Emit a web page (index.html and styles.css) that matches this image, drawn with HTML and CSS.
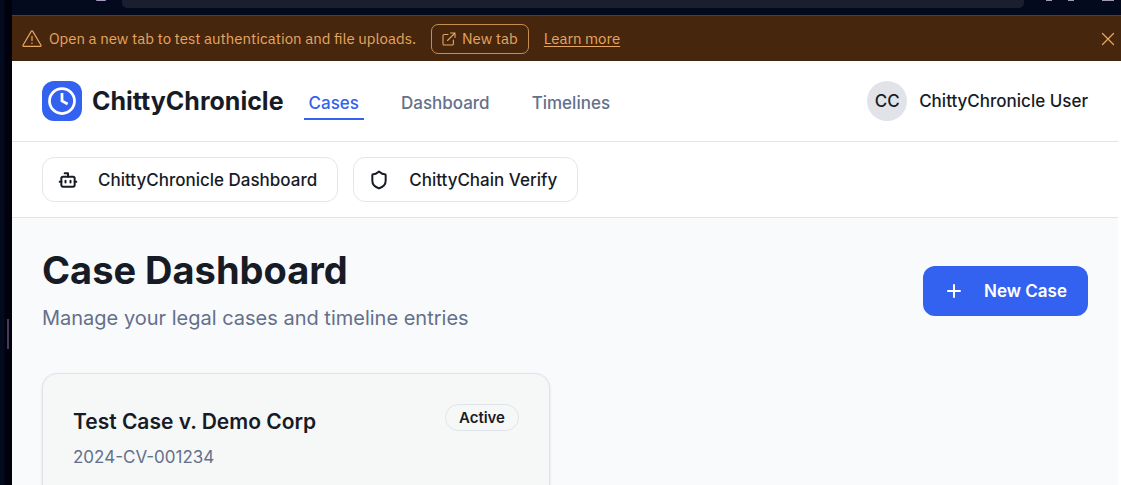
FILE: index.html
```html
<!DOCTYPE html>
<html lang="en">
<head>
<meta charset="utf-8">
<meta name="viewport" content="width=device-width, initial-scale=1">
<title>ChittyChronicle</title>
<link rel="stylesheet" href="styles.css">
</head>
<body>
<div class="shell">
  <div class="gutter"><span class="grip"></span></div>
  <div class="pane">
    <div class="chrome">
      <span class="chrome-dot"></span>
      <span class="address"></span>
      <span class="chrome-tools"><i class="tool"></i><i class="tool"></i><i class="tool wide"></i></span>
    </div>
    <div class="banner">
      <svg class="icon-warning" viewBox="0 0 20 18" fill="none" stroke="currentColor" stroke-width="1.2" stroke-linejoin="round" stroke-linecap="round"><path d="M9.2 1.4 1 15.2c-.3.6 0 1.2.7 1.2h16.6c.7 0 1-.6.7-1.2L10.8 1.4c-.4-.6-1.200-.6-1.600 0Z"/><path d="M10 6.300v4.200M10 12.900v.5"/></svg>
      <p class="banner-text">Open a new tab to test authentication and file uploads.</p>
      <button class="banner-button" type="button">
        <svg class="icon-external" viewBox="0 0 14 14" fill="none" stroke="currentColor" stroke-width="1.100" stroke-linecap="round" stroke-linejoin="round"><path d="M6 2.500H2.200A1.200 1.200 0 0 0 1 3.700v8A1.200 1.200 0 0 0 2.200 13h8a1.200 1.200 0 0 0 1.200-1.200V8M8.500 1H13v4.500M13 1 5.500 8.500"/></svg>
        New tab
      </button>
      <a class="banner-link" href="#">Learn more</a>
      <button class="banner-close" type="button" aria-label="Dismiss">
        <svg viewBox="0 0 14 14" fill="none" stroke="currentColor" stroke-width="1.300" stroke-linecap="round"><path d="M1.500 1.500l11 11M12.500 1.500l-11 11"/></svg>
      </button>
    </div>
    <div class="app">
      <header class="header">
        <a class="brand" href="#">
          <span class="logo"><svg viewBox="0 0 24 24" fill="none" stroke="currentColor" stroke-width="2.200" stroke-linecap="butt" stroke-linejoin="miter"><circle cx="12" cy="12" r="10"/><path d="M12 5.500V12l4.500 2.400"/></svg></span>
          ChittyChronicle
        </a>
        <nav class="nav">
          <a class="nav-link active" href="#">Cases</a>
          <a class="nav-link" href="#">Dashboard</a>
          <a class="nav-link" href="#">Timelines</a>
        </nav>
        <div class="user"><span class="avatar">CC</span><span>ChittyChronicle User</span></div>
      </header>
      <div class="toolbar">
        <button class="tool-button" type="button">
          <svg viewBox="0 0 24 24" fill="none" stroke="currentColor" stroke-width="2.400" stroke-linecap="round" stroke-linejoin="round"><path d="M12 8V4H8"/><rect x="4" y="8" width="16" height="12" rx="2"/><path d="M2 14h2M20 14h2M15 13v2M9 13v2"/></svg>
          ChittyChronicle Dashboard
        </button>
        <button class="tool-button" type="button">
          <svg viewBox="0 0 24 24" fill="none" stroke="currentColor" stroke-width="2.400" stroke-linecap="round" stroke-linejoin="round"><path d="M20 13c0 5-3.500 7.500-7.660 8.950a1 1 0 0 1-.67-.01C7.500 20.500 4 18 4 13V6a1 1 0 0 1 1-1c2 0 4.500-1.200 6.240-2.720a1.170 1.170 0 0 1 1.520 0C14.510 3.810 17 5 19 5a1 1 0 0 1 1 1z"/></svg>
          ChittyChain Verify
        </button>
      </div>
      <main class="main">
        <div class="page-head">
          <div>
            <h1 class="title">Case Dashboard</h1>
            <p class="subtitle">Manage your legal cases and timeline entries</p>
          </div>
          <button class="new-case" type="button">
            <svg viewBox="0 0 20 20" fill="none" stroke="currentColor" stroke-width="2" stroke-linecap="round"><path d="M10 4v12M4 10h12"/></svg>
            New Case
          </button>
        </div>
        <div class="cards">
          <article class="card">
            <div>
              <h2 class="card-title">Test Case v. Demo Corp</h2>
              <p class="card-number">2024-CV-001234</p>
            </div>
            <span class="badge">Active</span>
          </article>
        </div>
      </main>
    </div>
  </div>
</div>
</body>
</html>
```
FILE: styles.css
```css
* { box-sizing: border-box; }
body { margin: 0; overflow: hidden; background: #fff; color: #171b26; font-family: Inter, "Liberation Sans", sans-serif; font-size: 17px; line-height: 24px; }
h1, h2, p { margin: 0; }
a { color: inherit; text-decoration: none; }
button { margin: 0; font: inherit; color: inherit; background: none; border: 0; cursor: pointer; }
svg { display: block; flex: none; }

.shell { display: flex; height: 100vh; }
.gutter { flex: 0 0 12px; display: flex; justify-content: flex-end; align-items: center; padding: 182px 3px 0 0; background: linear-gradient(90deg, #030a1e 4px, #01010e 5px); }
.grip { width: 2px; height: 30px; background: #4a3a58; }
.pane { flex: 1; min-width: 0; display: flex; flex-direction: column; overflow: hidden; }

.chrome { flex: none; display: flex; height: 16px; padding-left: 84px; background: #030a1e; border-bottom: 1px solid #453d5c; }
.chrome-dot { width: 10px; height: 1px; background: #a99cc4; border-radius: 0 0 5px 5px; }
.address { flex: 1; height: 8px; margin-left: 16px; background: #1b1e2e; border-radius: 0 0 5px 5px; }
.chrome-tools { flex: 0 0 97px; display: flex; gap: 16px; padding-left: 22px; }
.tool { width: 6px; height: 1px; background: #a39ab2; }
.tool.wide { width: 12px; margin-left: 12px; }

.banner { flex: none; display: flex; align-items: center; height: 45px; padding: 0 6px 0 10px; background: #46270d; color: #e6a562; font-family: "IBM Plex Sans", Roboto, sans-serif; font-size: 15px; line-height: 20px; }
.icon-warning { width: 20px; height: 18px; margin-right: 7px; }
.banner-text { white-space: nowrap; }
.banner-button { display: flex; align-items: center; gap: 6px; height: 30px; margin: 0 15px; padding: 0 10px; border: 1px solid #c68d52; border-radius: 7px; white-space: nowrap; }
.icon-external { width: 14px; height: 14px; }
.banner-link { text-decoration: underline; text-underline-offset: 2px; white-space: nowrap; }
.banner-close { margin-left: auto; padding: 0; }
.banner-close svg { width: 14px; height: 14px; }

.app { flex: 1; margin-right: 3px; background: #f8fafc; }
.header { display: flex; align-items: center; height: 81px; padding: 0 30px; background: #fff; border-bottom: 1px solid #e2e4e8; font-weight: 500; }
.brand { display: flex; align-items: center; gap: 10px; font-size: 25px; font-weight: 700; }
.logo { display: grid; place-items: center; width: 40px; height: 40px; border-radius: 12px; background: #3361f0; color: #fff; }
.logo svg { width: 30px; height: 30px; }
.nav { display: flex; gap: 32px; margin-left: 20px; color: #64708a; }
.nav-link { padding: 8px 5px 3px; border-bottom: 2px solid transparent; }
.nav-link.active { color: #3361f0; border-color: #3361f0; }
.user { display: flex; align-items: center; gap: 12px; margin-left: auto; }
.avatar { display: grid; place-items: center; width: 40px; height: 40px; border-radius: 50%; background: #e2e3e9; }

.toolbar { display: flex; gap: 15px; padding: 15px 30px; background: #fff; border-bottom: 1px solid #e2e4e8; }
.tool-button { display: flex; align-items: center; gap: 20px; height: 45px; padding: 0 20px 0 15px; border: 1px solid #e5e6eb; border-radius: 12px; font-weight: 500; }
.tool-button svg { width: 20px; height: 20px; }

.main { padding: 30px; }
.page-head { display: flex; align-items: center; justify-content: space-between; margin-bottom: 40px; }
.title { font-size: 38px; line-height: 45px; font-weight: 700; }
.subtitle { margin-top: 10px; font-size: 20px; line-height: 30px; color: #64708a; }
.new-case { display: flex; align-items: center; gap: 20px; height: 50px; padding: 0 21px; border-radius: 12px; background: #3361f0; color: #fff; font-weight: 600; }
.new-case svg { width: 20px; height: 20px; }

.cards { display: grid; grid-template-columns: repeat(2, 1fr); gap: 30px; }
.card { display: flex; justify-content: space-between; align-items: flex-start; min-height: 200px; padding: 30px; background: #f6f8f7; border: 1px solid #e1e3ea; border-radius: 15px; box-shadow: 0 1px 3px #0000001a; }
.card-title { font-size: 21px; line-height: 36px; font-weight: 600; }
.card-number { margin-top: 5px; color: #64708a; }
.badge { padding: 2px 13px; border: 1px solid #e1e3ea; border-radius: 14px; font-size: 15px; line-height: 21px; font-weight: 600; }
```
